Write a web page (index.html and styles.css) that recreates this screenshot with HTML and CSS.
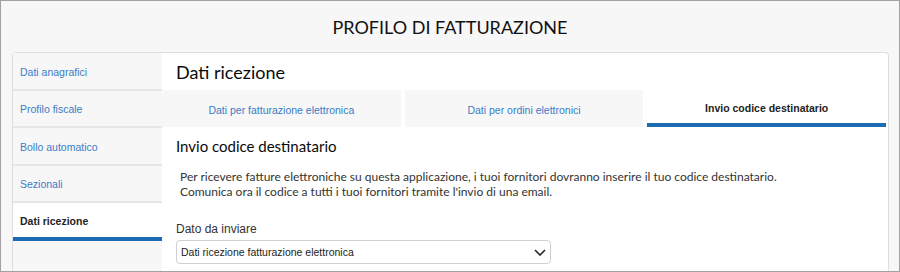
FILE: index.html
```html
<!DOCTYPE html>
<html lang="it">
<head>
<meta charset="utf-8">
<title>Profilo di fatturazione</title>
<link rel="stylesheet" href="styles.css">
</head>
<body>
<div class="frame">
  <h1 class="page-title">PROFILO DI FATTURAZIONE</h1>
  <div class="card">
    <nav class="sidebar">
      <a class="side-item">Dati anagrafici</a>
      <a class="side-item">Profilo fiscale</a>
      <a class="side-item">Bollo automatico</a>
      <a class="side-item">Sezionali</a>
      <a class="side-item active">Dati ricezione</a>
    </nav>
    <main class="main">
      <h2 class="main-title">Dati ricezione</h2>
      <div class="tabs">
        <a class="tab">Dati per fatturazione elettronica</a>
        <a class="tab">Dati per ordini elettronici</a>
        <a class="tab active">Invio codice destinatario</a>
      </div>
      <section class="panel">
        <h3 class="panel-title">Invio codice destinatario</h3>
        <p class="intro">Per ricevere fatture elettroniche su questa applicazione, i tuoi fornitori dovranno inserire il tuo codice destinatario.<br>Comunica ora il codice a tutti i tuoi fornitori tramite l'invio di una email.</p>
        <label class="field-label">Dato da inviare</label>
        <div class="select">
          <span>Dati ricezione fatturazione elettronica</span>
          <svg class="chevron" width="12" height="7" viewBox="0 0 12 7"><path d="M1 1 L6 6 L11 1" fill="none" stroke="#222" stroke-width="1.6"/></svg>
        </div>
      </section>
    </main>
  </div>
</div>
</body>
</html>
```

FILE: styles.css
```css
* { box-sizing: border-box; }
html, body { margin: 0; padding: 0; }
body { font-family: "Liberation Sans", Arial, sans-serif; }
.frame {
  width: 900px;
  height: 272px;
  border: 1px solid #a3a3a3;
  background: #f7f7f7;
  overflow: hidden;
  display: flex;
  flex-direction: column;
}
.page-title {
  margin: 0;
  height: 51px;
  padding-top: 14px;
  font-family: Lato, sans-serif;
  font-weight: 400;
  font-size: 18px;
  line-height: 24px;
  color: #111;
  text-align: center;
}
.card {
  margin: 0 10px 0 11px;
  flex: 1;
  display: flex;
  border: 1px solid #dedede;
  border-bottom: none;
  border-radius: 4px 4px 0 0;
  background: #fff;
}
.sidebar {
  width: 149px;
  flex: none;
  background: #f7f7f7;
  display: flex;
  flex-direction: column;
}
.side-item {
  display: flex;
  align-items: center;
  height: 37.5px;
  padding: 2px 0 0 7px;
  border-bottom: 2px solid #e6e6e6;
  font-size: 10.5px;
  color: #3a7cc6;
}
.side-item.active {
  height: 38px;
  background: #fff;
  color: #222;
  font-weight: 700;
  border-bottom: 4px solid #1c6ab2;
}
.main {
  flex: 1;
  display: flex;
  flex-direction: column;
  padding-right: 2px;
}
.main-title {
  margin: 0;
  height: 37px;
  padding-left: 14px;
  display: flex;
  align-items: center;
  font-family: Lato, sans-serif;
  font-weight: 400;
  font-size: 18px;
  color: #0a0a0a;
}
.tabs {
  display: flex;
  gap: 4px;
  height: 37px;
}
.tab {
  flex: 1;
  display: flex;
  align-items: center;
  justify-content: center;
  padding-top: 2px;
  background: #f7f7f7;
  font-size: 10.5px;
  color: #3a7cc6;
}
.tab.active {
  background: #fff;
  color: #222;
  font-weight: 700;
  border-bottom: 4px solid #1c6ab2;
}
.panel {
  padding: 8px 14px 0 14px;
}
.panel-title {
  margin: 0;
  font-family: Lato, sans-serif;
  font-weight: 400;
  font-size: 15px;
  line-height: 22px;
  color: #0a0a0a;
}
.intro {
  margin: 12px 0 0 4px;
  font-family: Lato, sans-serif;
  font-size: 12px;
  line-height: 15px;
  color: #333;
}
.field-label {
  display: block;
  margin-top: 23px;
  font-size: 12px;
  line-height: 14px;
  color: #333;
}
.select {
  margin-top: 4px;
  width: 375px;
  height: 24px;
  border: 1px solid #cfcfcf;
  border-radius: 4px;
  display: flex;
  align-items: center;
  justify-content: space-between;
  padding: 0 4px 0 4px;
  font-size: 10.5px;
  color: #222;
}
```
